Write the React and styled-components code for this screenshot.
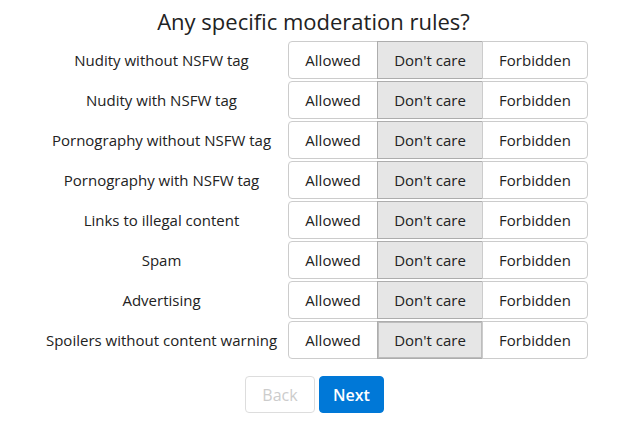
import React, { useState } from 'react';
import styled, { createGlobalStyle } from 'styled-components';

const GlobalStyle = createGlobalStyle`
	body {
		margin: 0;
		background: #fff;
		font-family: "Segoe UI", "Open Sans", "Noto Sans", sans-serif;
		color: #212529;
	}
`;

const rules = [
	'Nudity without NSFW tag',
	'Nudity with NSFW tag',
	'Pornography without NSFW tag',
	'Pornography with NSFW tag',
	'Links to illegal content',
	'Spam',
	'Advertising',
	'Spoilers without content warning'
];

const options = ['Allowed', "Don't care", 'Forbidden'];

const App = () => {
	const [values, setValues] = useState(rules.map(() => 1));

	const pick = (row, col) => {
		setValues(prev => prev.map((v, i) => (i === row ? col : v)));
	};

	return (
		<Page>
			<GlobalStyle />
			<Title>Any specific moderation rules?</Title>
			<Table>
				{rules.map((rule, row) => (
					<Row key={rule}>
						<Label>{rule}</Label>
						<Group>
							{options.map((opt, col) => (
								<Option
									key={opt}
									$wide={col > 0}
									$active={values[row] === col}
									$focused={row === rules.length - 1 && col === 1}
									onClick={() => pick(row, col)}
								>
									{opt}
								</Option>
							))}
						</Group>
					</Row>
				))}
			</Table>
			<Nav>
				<NavButton disabled>Back</NavButton>
				<NavButton $primary>Next</NavButton>
			</Nav>
		</Page>
	);
};

export default App;

const Page = styled.div`
	display: flex;
	flex-direction: column;
	align-items: center;
	padding-top: 6px;
`

const Title = styled.h1`
	margin: 0 0 5px;
	font-size: 22px;
	font-weight: 400;
	line-height: 30px;
	color: #222;
`

const Table = styled.div`
	display: grid;
	grid-template-columns: 249px auto;
	row-gap: 2px;
	margin-left: 0;
`

const Row = styled.div`
	display: contents;
`

const Label = styled.div`
	display: flex;
	align-items: center;
	justify-content: center;
	padding-right: 4px;
	font-size: 15px;
	color: #222;
	white-space: nowrap;
`

const Group = styled.div`
	display: flex;
	height: 38px;
`

const Option = styled.button`
	width: ${p => (p.$wide ? '106px' : '90px')};
	height: 38px;
	margin: 0;
	font-family: inherit;
	font-size: 15px;
	color: #222;
	background: ${p => (p.$active ? '#e6e6e6' : '#fff')};
	border: 1px solid #ccc;
	border-color: ${p => (p.$active ? '#adadad' : '#ccc')};
	margin-left: -1px;
	cursor: pointer;
	outline: none;
	box-shadow: ${p => (p.$focused ? 'inset 0 0 0 1px #bdbdbd' : 'none')};

	&:first-child {
		margin-left: 0;
		border-radius: 4px 0 0 4px;
	}
	&:last-child {
		border-radius: 0 4px 4px 0;
	}
`

const Nav = styled.div`
	display: flex;
	gap: 4px;
	margin-top: 17px;
	padding-left: 2px;
`

const NavButton = styled.button`
	width: ${p => (p.$primary ? '65px' : '70px')};
	height: 37px;
	padding: 0;
	font-family: inherit;
	font-size: 16px;
	border-radius: 4px;
	border: 1px solid ${p => (p.$primary ? '#0078d7' : '#ddd')};
	background: ${p => (p.$primary ? '#0078d7' : '#fff')};
	color: ${p => (p.$primary ? '#fff' : '#ccc')};
	font-weight: ${p => (p.$primary ? 600 : 400)};
	cursor: pointer;

	&:disabled {
		cursor: default;
	}
`
